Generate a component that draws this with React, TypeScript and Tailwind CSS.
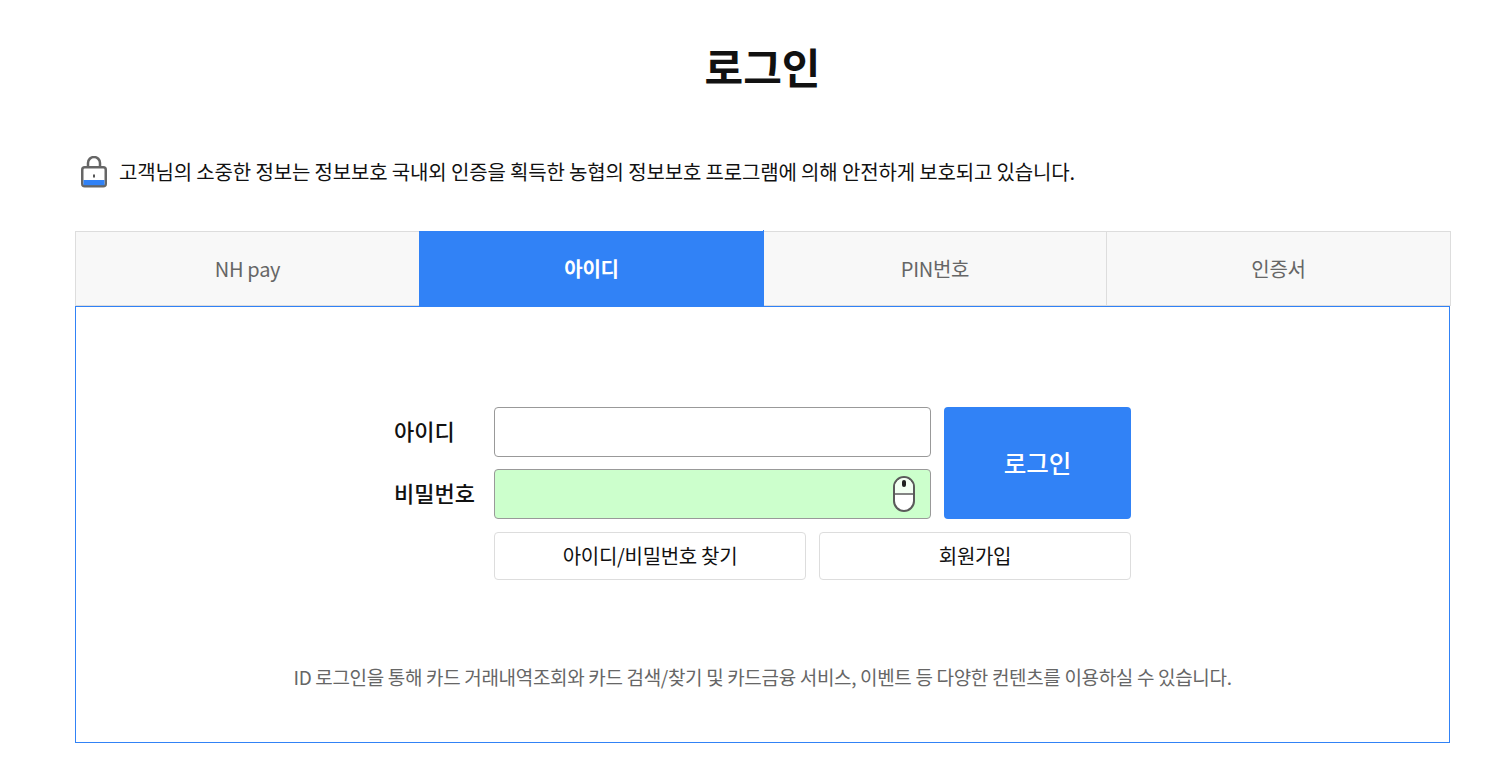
export default function App() {
  const tabs = ["NH pay", "아이디", "PIN번호", "인증서"];
  return (
    <div className="w-[1512px] h-[768px] overflow-hidden bg-white font-['Noto_Sans_CJK_KR','Noto_Sans',sans-serif] text-[#111]">
      <div className="ml-[75px] w-[1375px]">
        <h1 className="pt-[30px] h-[104px] text-center text-[42px] leading-[72px] font-bold text-[#111]">로그인</h1>
        <div className="mt-[44px] flex items-center h-[48px] pl-[6px]">
          <svg width="26" height="32" viewBox="0 0 26 32" className="shrink-0">
            <path d="M7 12V7a6 6 0 0 1 12 0v5" fill="none" stroke="#666" strokeWidth="2.5" />
            <rect x="1.25" y="11.25" width="23.5" height="19" rx="2.5" fill="#fff" stroke="#666" strokeWidth="2.5" />
            <rect x="2.5" y="24" width="21" height="5.2" fill="#3182f6" />
            <rect x="12" y="18.5" width="2" height="3" fill="#555" />
          </svg>
          <p className="ml-[12px] text-[20px] leading-[28px] tracking-[-0.15px] text-[#111]">고객님의 소중한 정보는 정보보호 국내외 인증을 획득한 농협의 정보보호 프로그램에 의해 안전하게 보호되고 있습니다.</p>
        </div>
        <div className="mt-[35px] flex h-[75px] w-[1376px]">
          {tabs.map((t, i) =>
            i === 1 ? (
              <div key={t} className="relative w-[345px] h-[76px] flex items-center justify-center bg-[#3182f6] text-white text-[20px] font-bold tracking-[-0.3px] pb-[1px]">
                {t}
                <span className="absolute -top-px right-0 w-px h-px bg-[#3182f6]" />
              </div>
            ) : (
              <div key={t} className={`flex items-center justify-center bg-[#f8f8f8] border-t border-b border-[#dddddd] text-[20px] tracking-[-0.3px] text-[#666] ${i === 0 ? "w-[344px] border-l" : i === 2 ? "w-[343px] border-r" : "w-[344px] border-r"}`}>{t}</div>
            )
          )}
        </div>
        <div className="h-[437px] border border-[#3182f6] flex flex-col items-center">
          <div className="mt-[100px] w-[737px] flex flex-col">
            <div className="flex">
              <div className="flex flex-col w-[100px] text-[22px] font-medium text-[#111]">
                <div className="h-[50px] flex items-center pb-[3px]">아이디</div>
                <div className="mt-[12px] h-[50px] flex items-center pb-[3px]">비밀번호</div>
              </div>
              <div className="flex flex-col w-[437px] gap-[12px]">
                <div className="h-[50px] border border-[#999] rounded-[4px] bg-white" />
                <div className="h-[50px] border border-[#999] rounded-[4px] bg-[#ccffcc] flex items-center justify-end pr-[15px]">
                  <svg width="22" height="36" viewBox="0 0 22 36">
                    <rect x="1" y="1" width="20" height="34" rx="10" fill="#fff" stroke="#5a5a5a" strokeWidth="2" />
                    <path d="M1 18h20" stroke="#5a5a5a" strokeWidth="1.5" />
                    <path d="M2 17V11a9 9 0 0 1 18 0v6z" fill="#f2fff2" />
                    <rect x="9" y="4" width="4" height="7" rx="2" fill="#222" />
                  </svg>
                </div>
              </div>
              <button className="ml-[13px] w-[187px] h-[112px] rounded-[4px] bg-[#3182f6] text-white text-[24.5px] font-medium">로그인</button>
            </div>
            <div className="mt-[13px] ml-[100px] flex gap-[13px]">
              <button className="w-[312px] h-[48px] rounded-[4px] border border-[#ddd] bg-white text-[20px] tracking-[-0.3px] text-[#111]">아이디/비밀번호 찾기</button>
              <button className="w-[312px] h-[48px] rounded-[4px] border border-[#ddd] bg-white text-[20px] tracking-[-0.3px] text-[#111]">회원가입</button>
            </div>
          </div>
          <p className="mt-[83px] text-[19px] leading-[28px] text-[#666] tracking-[-0.33px]">ID 로그인을 통해 카드 거래내역조회와 카드 검색/찾기 및 카드금융 서비스, 이벤트 등 다양한 컨텐츠를 이용하실 수 있습니다.</p>
        </div>
      </div>
    </div>
  );
}
